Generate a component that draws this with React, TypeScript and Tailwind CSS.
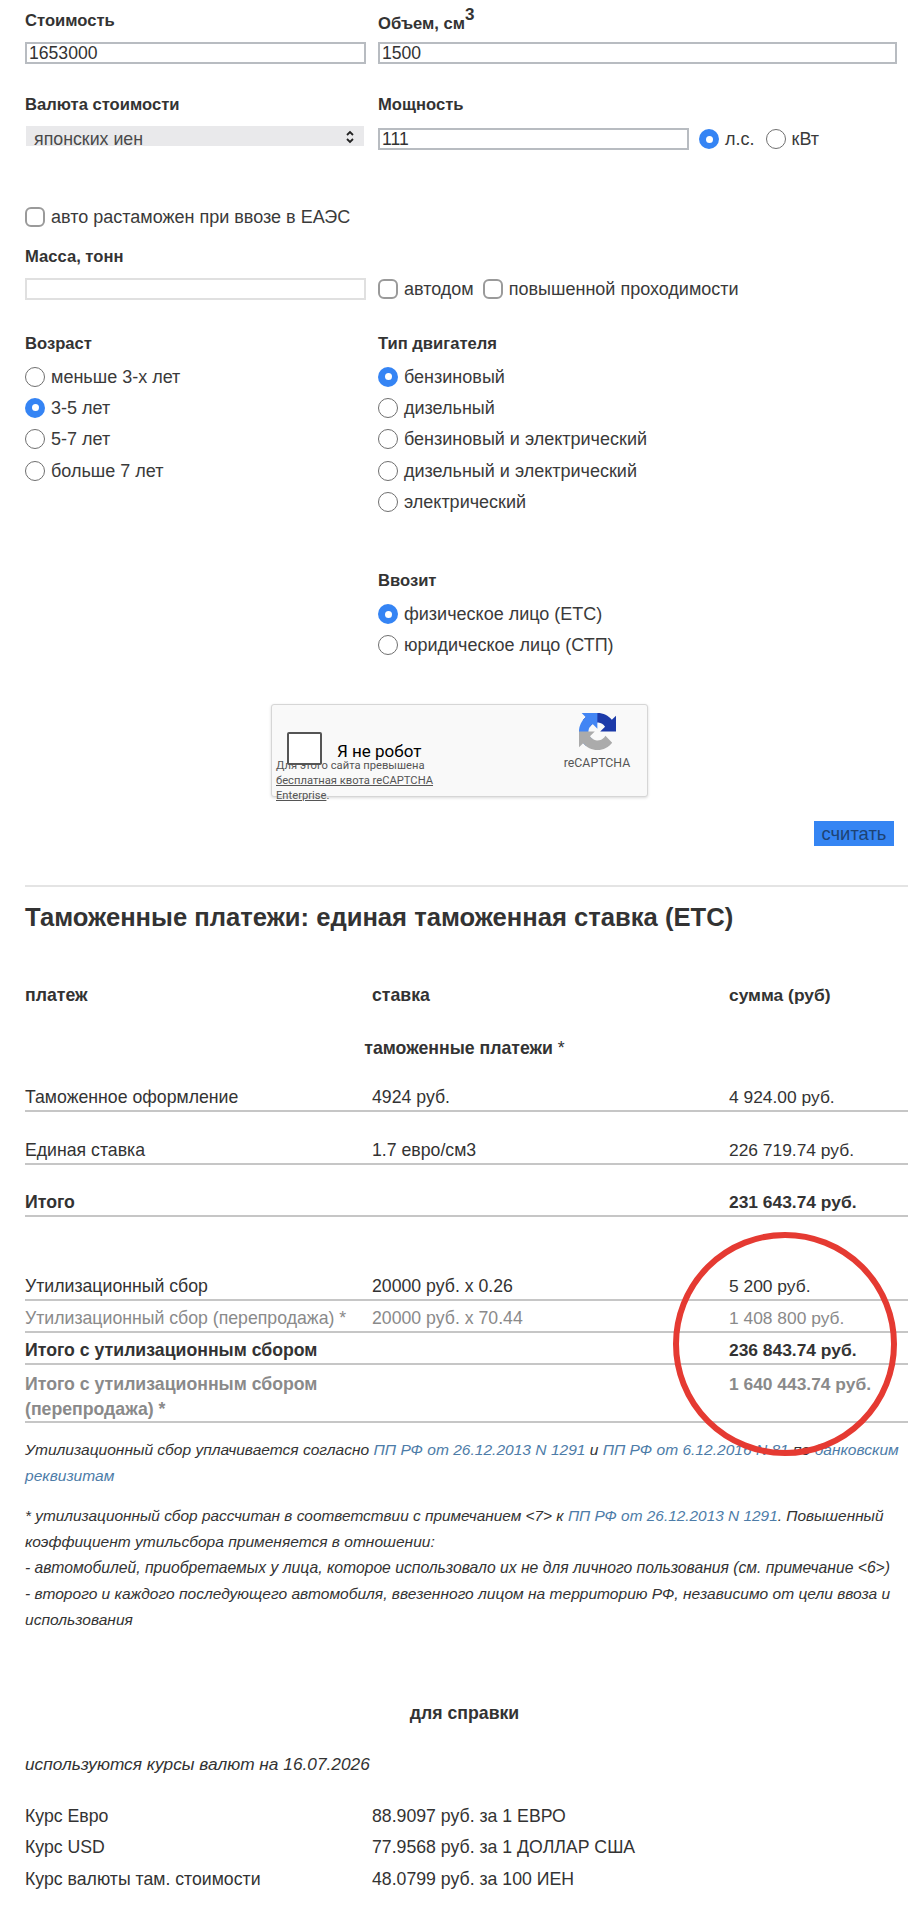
import React from "react";

const Label = ({ children }: { children: React.ReactNode }) => (
  <div className="h-[24px] text-[16.6px] font-bold leading-[26px] text-[#333]">{children}</div>
);

const TextBox = ({ value, className }: { value?: string; className: string }) => (
  <div className={"h-[22px] border-2 border-[#b8bcc1] bg-white pl-[2px] text-[17.6px] leading-[18px] text-[#333] " + className}>
    {value}
  </div>
);

const Radio = ({ on }: { on?: boolean }) =>
  on ? (
    <span className="flex h-[20px] w-[20px] shrink-0 items-center justify-center rounded-full bg-[#3584f4]">
      <span className="h-[7px] w-[7px] rounded-full bg-white" />
    </span>
  ) : (
    <span className="h-[20px] w-[20px] shrink-0 rounded-full border border-[#6f6f6f] bg-white" />
  );

const Check = () => <span className="h-[20px] w-[20px] shrink-0 rounded-[6px] border-2 border-[#9a9a9a] bg-white" />;

const RadioRow = ({ on, children }: { on?: boolean; children: React.ReactNode }) => (
  <div className="flex h-[31.3px] items-center gap-[6px] text-[18px] leading-[20px] text-[#3a3a3a]">
    <Radio on={on} />
    <span>{children}</span>
  </div>
);

const Row = ({
  h,
  a,
  b,
  c,
  cls,
}: {
  h: string;
  a: React.ReactNode;
  b?: React.ReactNode;
  c: React.ReactNode;
  cls?: string;
}) => (
  <div className={"grid grid-cols-[347px_357px_1fr] items-end border-b-2 border-[#c6c6c6] pb-[2px] leading-[21px] " + h + " " + (cls || "")}>
    <div>{a}</div>
    <div>{b}</div>
    <div className="text-[17.4px]">{c}</div>
  </div>
);

const Rate = ({ a, b }: { a: string; b: string }) => (
  <div className="grid h-[31.5px] grid-cols-[347px_1fr] items-center">
    <div>{a}</div>
    <div>{b}</div>
  </div>
);

const L = ({ children }: { children: React.ReactNode }) => <span className="text-[#4d7ca8]">{children}</span>;

export default function App() {
  return (
    <div className="relative h-[1920px] w-[920px] overflow-hidden bg-white pl-[25px] pr-[12px] pt-[8px] text-[17.7px] leading-[20px] text-[#333] [font-family:'Liberation_Sans',Arial,sans-serif]">
      {/* cost + volume */}
      <div className="flex">
        <div className="w-[353px]">
          <Label>Стоимость</Label>
          <TextBox value="1653000" className="mt-[10px] w-[341px]" />
        </div>
        <div className="flex-1">
          <Label>
            Объем, см<sup className="relative -top-[2px] align-super text-[17px] leading-none">3</sup>
          </Label>
          <TextBox value="1500" className="mt-[10px] w-[519px]" />
        </div>
      </div>

      {/* currency + power */}
      <div className="mt-[28px] flex">
        <div className="w-[353px]">
          <Label>Валюта стоимости</Label>
          <div className="relative ml-[1px] mt-[10px] h-[20px] w-[338px] bg-[#e9e9eb] pl-[8px] pt-[3px] text-[17.8px] leading-[20px] text-[#4a4a4a]">
            японских иен
            <svg className="absolute right-[9px] top-[4px]" width="10" height="14" viewBox="0 0 10 14" fill="none" stroke="#222" strokeWidth="1.8">
              <path d="M2 5l3-3 3 3M2 9l3 3 3-3" />
            </svg>
          </div>
        </div>
        <div className="flex-1">
          <Label>Мощность</Label>
          <div className="mt-[12px] flex items-center text-[18px] text-[#3a3a3a]">
            <TextBox value="111" className="w-[311px]" />
            <div className="ml-[10px] flex items-center gap-[6px]">
              <Radio on />
              <span>л.с.</span>
            </div>
            <div className="ml-[11px] flex items-center gap-[6px]">
              <Radio />
              <span>кВт</span>
            </div>
          </div>
        </div>
      </div>

      {/* customs check */}
      <div className="mt-[57px] flex h-[20px] items-center gap-[6px] text-[18px] text-[#3a3a3a]">
        <Check />
        <span>авто растаможен при ввозе в ЕАЭС</span>
      </div>

      {/* mass */}
      <div className="mt-[17px]">
        <Label>Масса, тонн</Label>
        <div className="mt-[10px] flex items-center text-[18px] text-[#3a3a3a]">
          <div className="h-[22px] w-[341px] border-2 border-[#e0e0e0] bg-white" />
          <div className="ml-[12px] flex items-center gap-[6px]">
            <Check />
            <span>автодом</span>
          </div>
          <div className="ml-[9px] flex items-center gap-[6px]">
            <Check />
            <span>повышенной проходимости</span>
          </div>
        </div>
      </div>

      {/* age + engine */}
      <div className="mt-[31px] flex">
        <div className="w-[353px]">
          <Label>Возраст</Label>
          <div className="mt-[6px]">
            <RadioRow>меньше 3-х лет</RadioRow>
            <RadioRow on>3-5 лет</RadioRow>
            <RadioRow>5-7 лет</RadioRow>
            <RadioRow>больше 7 лет</RadioRow>
          </div>
        </div>
        <div className="flex-1">
          <Label>Тип двигателя</Label>
          <div className="mt-[6px]">
            <RadioRow on>бензиновый</RadioRow>
            <RadioRow>дизельный</RadioRow>
            <RadioRow>бензиновый и электрический</RadioRow>
            <RadioRow>дизельный и электрический</RadioRow>
            <RadioRow>электрический</RadioRow>
          </div>
        </div>
      </div>

      {/* importer */}
      <div className="ml-[353px] mt-[51px]">
        <Label>Ввозит</Label>
        <div className="mt-[6px]">
          <RadioRow on>физическое лицо (ЕТС)</RadioRow>
          <RadioRow>юридическое лицо (СТП)</RadioRow>
        </div>
      </div>

      {/* recaptcha */}
      <div className="relative ml-[246px] mt-[43px] flex h-[93px] w-[377px] rounded-[3px] border border-[#d6d6d6] bg-[#f9f9f9] shadow-[0_1px_3px_rgba(0,0,0,0.15)] [font-family:Roboto,sans-serif]">
        <div className="ml-[15px] mt-[27px] h-[33px] w-[35px] rounded-[2px] border-2 border-[#555] bg-white" />
        <div className="ml-[15px] mt-[36px] text-[17px] leading-[20px] text-black">Я не робот</div>
        <div className="absolute right-[16px] top-[8px] flex w-[68px] flex-col items-center">
          <svg width="37" height="37" viewBox="0 0 64 64">
            <path d="M64 31.955l-.033-1.37V4.687l-7.16 7.16C50.948 4.674 42.033.093 32.05.093c-10.4 0-19.622 4.96-25.458 12.64l11.736 11.86a15.55 15.55 0 0 1 4.754-5.334c2.05-1.6 4.952-2.906 8.968-2.906.485 0 .86.057 1.137.163 4.976.393 9.288 3.14 11.83 7.125l-8.307 8.307c10.52-.04 22.4-.066 27.295.005" fill="#1c3aa9" />
            <path d="M31.862.094l-1.37.033H4.594l7.16 7.16C4.58 13.147 0 22.06 0 32.046c0 10.4 4.96 19.622 12.64 25.458l11.86-11.736a15.55 15.55 0 0 1-5.334-4.754c-1.6-2.05-2.906-4.952-2.906-8.968 0-.485.057-.86.163-1.137.393-4.976 3.14-9.288 7.125-11.83l8.307 8.307c-.04-10.52-.066-22.4.005-27.295" fill="#4285f4" />
            <path d="M.001 32.045l.033 1.37v25.898l7.16-7.16c5.86 7.173 14.774 11.754 24.76 11.754 10.4 0 19.622-4.96 25.458-12.64l-11.736-11.86a15.55 15.55 0 0 1-4.754 5.334c-2.05 1.6-4.952 2.906-8.968 2.906-.485 0-.86-.057-1.137-.163-4.976-.393-9.288-3.14-11.83-7.125l8.307-8.307c-10.52.04-22.4.066-27.295-.005" fill="#ababab" />
          </svg>
          <div className="mt-[5px] text-[12.3px] leading-[16px] text-[#555]">reCAPTCHA</div>
        </div>
        <div className="absolute left-[4px] top-[53px] whitespace-nowrap text-[11.2px] leading-[15px] text-[#555]">
          <div>Для этого сайта превышена</div>
          <div>
            <span className="underline">бесплатная квота reCAPTCHA</span>
          </div>
          <div>
            <span className="underline">Enterprise</span>.
          </div>
        </div>
      </div>

      {/* submit */}
      <div className="mt-[24px] flex justify-end pr-[14px]">
        <div className="flex h-[25px] w-[80px] items-center justify-center bg-[#3585f3] text-[18.4px] text-[#1d4373] [font-family:'Liberation_Sans',sans-serif]">
          считать
        </div>
      </div>

      <div className="mt-[39px] h-[2px] bg-[#e4e4e4]" />

      <h1 className="mt-[10px] h-[40px] text-[25.6px] font-bold leading-[40px] text-[#333]">
        Таможенные платежи: единая таможенная ставка (ЕТС)
      </h1>

      {/* table */}
      <div className="mt-[46px] grid h-[24px] grid-cols-[347px_357px_1fr] items-center font-bold">
        <div>платеж</div>
        <div>ставка</div>
        <div className="text-[17.4px]">сумма (руб)</div>
      </div>
      <div className="mt-[29px] h-[24px] pr-[4px] text-center leading-[24px]">
        <b>таможенные платежи</b> *
      </div>
      <Row h="h-[52px]" a="Таможенное оформление" b="4924 руб." c="4 924.00 руб." />
      <Row h="h-[53px]" a="Единая ставка" b="1.7 евро/см3" c="226 719.74 руб." />
      <Row h="h-[52px]" a="Итого" c="231 643.74 руб." cls="font-bold" />
      <Row h="h-[84px]" a="Утилизационный сбор" b="20000 руб. x 0.26" c="5 200 руб." />
      <Row h="h-[32px]" a="Утилизационный сбор (перепродажа) *" b="20000 руб. x 70.44" c="1 408 800 руб." cls="text-[#8a8a8a]" />
      <Row h="h-[32px]" a="Итого с утилизационным сбором" c="236 843.74 руб." cls="font-bold" />
      <div className="grid h-[58px] grid-cols-[347px_357px_1fr] items-start border-b-2 border-[#c6c6c6] pt-[7px] font-bold leading-[25px] text-[#8a8a8a]">
        <div>
          <div>Итого с утилизационным сбором</div>
          <div>(перепродажа) *</div>
        </div>
        <div />
        <div className="text-[17.4px]">1 640 443.74 руб.</div>
      </div>

      {/* notes */}
      <div className="mt-[14px] whitespace-nowrap text-[15.55px] italic leading-[26px]">
        <div>
          Утилизационный сбор уплачивается согласно <L>ПП РФ от 26.12.2013 N 1291</L> и <L>ПП РФ от 6.12.2016 N 81</L> по <L>банковским</L>
        </div>
        <div>
          <L>реквизитам</L>
        </div>
      </div>
      <div className="mt-[14px] whitespace-nowrap text-[15.55px] italic leading-[26px]">
        <div className="text-[15.4px]">
          * утилизационный сбор рассчитан в соответствии с примечанием &lt;7&gt; к <L>ПП РФ от 26.12.2013 N 1291</L>. Повышенный
        </div>
        <div>коэффициент утильсбора применяется в отношении:</div>
        <div className="text-[15.7px]">- автомобилей, приобретаемых у лица, которое использовало их не для личного пользования (см. примечание &lt;6&gt;)</div>
        <div>- второго и каждого последующего автомобиля, ввезенного лицом на территорию РФ, независимо от цели ввоза и</div>
        <div>использования</div>
      </div>

      <div className="mt-[68px] h-[24px] pr-[4px] text-center font-bold leading-[24px]">для справки</div>
      <div className="mt-[27px] h-[24px] text-[17.3px] italic leading-[24px]">используются курсы валют на 16.07.2026</div>
      <div className="mt-[24px]">
        <Rate a="Курс Евро" b="88.9097 руб. за 1 ЕВРО" />
        <Rate a="Курс USD" b="77.9568 руб. за 1 ДОЛЛАР США" />
        <Rate a="Курс валюты там. стоимости" b="48.0799 руб. за 100 ИЕН" />
      </div>

      {/* red hand-drawn circle */}
      <div className="pointer-events-none absolute left-[673px] top-[1232px] h-[224px] w-[224px] rounded-full border-[6px] border-[#e53a32]" />
    </div>
  );
}
